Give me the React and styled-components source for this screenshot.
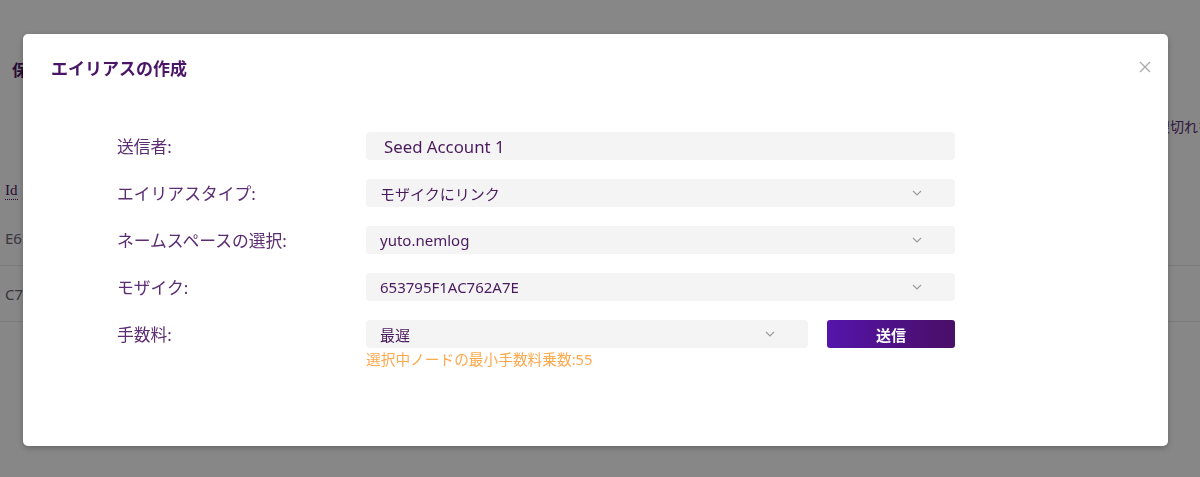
import React from "react";
import styled, { createGlobalStyle } from "styled-components";

const GlobalStyle = createGlobalStyle`
  html, body {
    margin: 0;
    padding: 0;
    background: #ffffff;
    overflow: hidden;
  }
  body {
    font-family: "Noto Sans", "Noto Sans CJK JP", sans-serif;
    color: #4a1a5e;
  }
`;

// page behind the modal
const Page = styled.div`
  width: 1200px;
  height: 477px;
  overflow: hidden;
`;

const PageTitle = styled.h2`
  margin: 0;
  padding: 59px 0 0 12px;
  font-size: 16px;
  line-height: 22px;
  font-weight: 700;
  color: #4a1566;
`;

const Toolbar = styled.div`
  display: flex;
  justify-content: flex-end;
  margin-top: 36px;
  margin-right: -40px;
  font-size: 14px;
  line-height: 20px;
  color: #5c2d73;
`;

const Table = styled.div`
  margin-top: 35px;
`;

const TableRow = styled.div`
  display: flex;
  align-items: center;
  height: ${(p) => (p.head ? "38px" : "55px")};
  padding-left: 5px;
  border-bottom: ${(p) => (p.head ? "none" : "1px solid #e8e8e8")};
  font-size: 15px;
  color: ${(p) => (p.head ? "#4a1566" : "#6e6478")};
`;

const Abbr = styled.span`
  border-bottom: 1px dotted #4a1566;
  font-family: "Liberation Serif", serif;
`;

// modal
const Overlay = styled.div`
  position: fixed;
  inset: 0;
  background: rgba(0, 0, 0, 0.47);
`;

const Modal = styled.div`
  position: absolute;
  top: 34px;
  left: 23px;
  width: 1145px;
  height: 412px;
  background: #ffffff;
  border-radius: 5px;
  box-shadow: 0 2px 6px rgba(0, 0, 0, 0.25);
  box-sizing: border-box;
`;

const Header = styled.div`
  display: flex;
  align-items: center;
  justify-content: space-between;
  height: 66px;
  padding: 0 16px 0 28px;
`;

const Title = styled.div`
  font-size: 17px;
  font-weight: 700;
  color: #4a1566;
`;

const Close = styled.button`
  border: none;
  background: none;
  padding: 0;
  width: 14px;
  height: 14px;
  display: flex;
  cursor: pointer;
`;

const Body = styled.div`
  padding: 32px 0 0 94px;
`;

const Form = styled.div`
  display: grid;
  grid-template-columns: 249px 589px;
  row-gap: 19px;
  align-items: start;
`;

const Label = styled.div`
  height: 28px;
  display: flex;
  align-items: center;
  font-size: 16.8px;
  color: #5c2d73;
`;

const Field = styled.div`
  height: 28px;
  display: flex;
  align-items: center;
  justify-content: space-between;
  padding: ${(p) => (p.input ? "0 18px" : "0 33px 0 14px")};
  background: #f4f4f4;
  border-radius: 4px;
  font-size: ${(p) => (p.input ? "16.8px" : "15px")};
  color: #4a1a5e;
  box-sizing: border-box;
  flex: 1;
`;

const FeeRow = styled.div`
  display: flex;
  gap: 19px;
`;

const SubmitButton = styled.button`
  width: 128px;
  height: 28px;
  border: none;
  border-radius: 3px;
  background: linear-gradient(90deg, #5515ab 0%, #4d1080 60%, #4a0f66 100%);
  color: #ffffff;
  font-family: "Noto Sans", "Noto Sans CJK JP", sans-serif;
  font-size: 15px;
  font-weight: 700;
  cursor: pointer;
`;

const Hint = styled.div`
  margin-top: 2px;
  font-size: 14.7px;
  line-height: 18px;
  color: #ffa94d;
`;

const Chevron = () => (
  <svg width="10" height="6" viewBox="0 0 10 6" fill="none">
    <path d="M1 1l4 4 4-4" stroke="#9a9a9a" strokeWidth="1.1" />
  </svg>
);

const Select = ({ children }) => (
  <Field>
    <span>{children}</span>
    <Chevron />
  </Field>
);

export default function App() {
  return (
    <>
      <GlobalStyle />
      <Page>
        <PageTitle>保有エイリアス</PageTitle>
        <Toolbar>期限切れを表示</Toolbar>
        <Table>
          <TableRow head>
            <Abbr>Id</Abbr>
          </TableRow>
          <TableRow>E6</TableRow>
          <TableRow>C7</TableRow>
        </Table>
      </Page>
      <Overlay>
        <Modal>
          <Header>
            <Title>エイリアスの作成</Title>
            <Close aria-label="close">
              <svg width="14" height="14" viewBox="0 0 14 14">
                <path d="M2 2l10 10M12 2L2 12" stroke="#a8a8a8" strokeWidth="1.2" />
              </svg>
            </Close>
          </Header>
          <Body>
            <Form>
              <Label>送信者:</Label>
              <Field input>Seed Account 1</Field>

              <Label>エイリアスタイプ:</Label>
              <Select>モザイクにリンク</Select>

              <Label>ネームスペースの選択:</Label>
              <Select>yuto.nemlog</Select>

              <Label>モザイク:</Label>
              <Select>653795F1AC762A7E</Select>

              <Label>手数料:</Label>
              <div>
                <FeeRow>
                  <Select>最遅</Select>
                  <SubmitButton>送信</SubmitButton>
                </FeeRow>
                <Hint>選択中ノードの最小手数料乗数:55</Hint>
              </div>
            </Form>
          </Body>
        </Modal>
      </Overlay>
    </>
  );
}
